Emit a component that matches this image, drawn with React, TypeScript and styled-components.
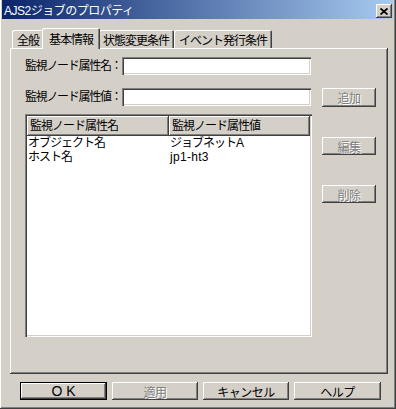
import * as React from 'react'
import styled, { createGlobalStyle } from 'styled-components'

const face = '#d4d0c8'
const shadow = '#808080'
const dark = '#404040'

const raised = `inset -1px -1px ${dark}, inset 1px 1px #fff, inset -2px -2px ${shadow}`
const sunken = `inset 1px 1px ${shadow}, inset 2px 2px ${dark}, inset -1px -1px #fff, inset -2px -2px ${face}`

const GlobalStyle = createGlobalStyle`
  body {
    margin: 0;
    background: ${face};
    font-family: "Liberation Sans", "Noto Sans CJK JP", sans-serif;
    font-size: 12px;
    color: #000;
  }
`

const Window = styled.div`
  width: 396px;
  height: 409px;
  box-sizing: border-box;
  padding: 0 3px 2px 2px;
  background: ${face};
  box-shadow: inset -1px -1px ${dark}, inset 1px 0 #fff, inset -2px -2px ${shadow};
  display: flex;
  flex-direction: column;
`

const TitleBar = styled.div`
  height: 19px;
  flex-shrink: 0;
  display: flex;
  align-items: center;
  justify-content: space-between;
  padding: 0 1px 0 2px;
  background: linear-gradient(to right, #0a246a, #a6caf0);
  color: #fff;
  letter-spacing: -0.5px;
`

const CloseButton = styled.div`
  width: 16px;
  height: 14px;
  margin-top: 3px;
  display: flex;
  align-items: center;
  justify-content: center;
  background: ${face};
  box-shadow: ${raised};
`

const Body = styled.div`
  flex: 1;
  display: flex;
  flex-direction: column;
  padding: 9px 5px 0 8px;
`

const TabStrip = styled.div`
  display: flex;
  align-items: flex-end;
  height: 20px;
  padding-left: 2px;
  position: relative;
  z-index: 1;
`

const Tab = styled.div<{ active?: boolean }>`
  height: ${p => (p.active ? 21 : 18)}px;
  margin: ${p => (p.active ? '0 -2px -1px' : '0')};
  padding: ${p => (p.active ? '0 7px' : '0 5px')};
  display: flex;
  align-items: center;
  box-sizing: border-box;
  background: ${face};
  border-radius: 2px 2px 0 0;
  box-shadow: inset 1px 1px #fff, inset -1px 0 ${dark}, inset -2px 0 ${shadow};
  letter-spacing: -1px;
  white-space: nowrap;
  position: relative;
  z-index: ${p => (p.active ? 2 : 0)};
`

const Panel = styled.div`
  width: 378px;
  height: 326px;
  box-sizing: border-box;
  padding: 9px 0 0 15px;
  box-shadow: ${raised};
`

const FieldRow = styled.div<{ gap?: number }>`
  display: flex;
  align-items: flex-start;
  margin-top: ${p => p.gap || 0}px;
`

const Label = styled.div`
  width: 97px;
  height: 18px;
  line-height: 19px;
  white-space: nowrap;
  letter-spacing: -1.3px;
`

const TextBox = styled.div`
  width: 189px;
  height: 18px;
  background: #fff;
  box-shadow: ${sunken};
`

const Button = styled.div<{ width: number; disabled?: boolean; isDefault?: boolean; height?: number }>`
  width: ${p => p.width}px;
  height: ${p => p.height || 18}px;
  flex-shrink: 0;
  display: flex;
  align-items: center;
  justify-content: center;
  background: ${face};
  box-shadow: ${p =>
    p.isDefault
      ? `inset 0 0 0 1px #000, inset -2px -2px ${dark}, inset 2px 2px #fff, inset -3px -3px ${shadow}`
      : raised};
  color: ${p => (p.disabled ? shadow : '#000')};
  text-shadow: ${p => (p.disabled ? '1px 1px #fff' : 'none')};
  letter-spacing: -0.5px;
`

const ButtonText = styled.span`
  font-size: 14px;
  letter-spacing: 4px;
  margin-right: -4px;
`

const Content = styled.div`
  display: flex;
  margin-top: 7px;
`

const ListView = styled.div`
  width: 287px;
  height: 223px;
  box-sizing: border-box;
  padding: 2px;
  background: #fff;
  box-shadow: ${sunken};
`

const ListHeader = styled.div`
  display: flex;
  height: 20px;
`

const HeaderCell = styled.div<{ width: number }>`
  width: ${p => p.width}px;
  box-sizing: border-box;
  padding-left: 3px;
  line-height: 20px;
  background: ${face};
  box-shadow: ${raised};
  letter-spacing: -1px;
  white-space: nowrap;
  overflow: hidden;
`

const ListRow = styled.div`
  display: flex;
  height: 14px;
  line-height: 14px;
  &:first-of-type {
    margin-top: 1px;
  }
`

const ListCell = styled.div<{ width: number; latin?: boolean }>`
  width: ${p => p.width}px;
  padding-left: 1px;
  box-sizing: border-box;
  letter-spacing: ${p => (p.latin ? '0.3px' : '-1px')};
  white-space: nowrap;
`

const SideButtons = styled.div`
  display: flex;
  flex-direction: column;
  gap: 30px;
  margin-left: 10px;
  padding-top: 23px;
`

const Footer = styled.div`
  display: flex;
  gap: 5px;
  margin: 8px 0 0 10px;
`

const rows = [
  { name: 'オブジェクト名', value: 'ジョブネットA', latin: false },
  { name: 'ホスト名', value: 'jp1-ht3', latin: true },
]

export default function App() {
  return (
    <Window>
      <GlobalStyle />
      <TitleBar>
        <span>AJS2ジョブのプロパティ</span>
        <CloseButton>
          <svg width="8" height="7" viewBox="0 0 8 7">
            <path d="M0.5 0.5 L7.5 6.5 M7.5 0.5 L0.5 6.5" stroke="#000" strokeWidth="1.8" />
          </svg>
        </CloseButton>
      </TitleBar>
      <Body>
        <TabStrip>
          <Tab>全般</Tab>
          <Tab active>基本情報</Tab>
          <Tab>状態変更条件</Tab>
          <Tab>イベント発行条件</Tab>
        </TabStrip>
        <Panel>
          <FieldRow>
            <Label>監視ノード属性名：</Label>
            <TextBox />
          </FieldRow>
          <FieldRow gap={13}>
            <Label>監視ノード属性値：</Label>
            <TextBox />
            <div style={{ marginLeft: 11 }}>
              <Button width={54} height={19} disabled>追加</Button>
            </div>
          </FieldRow>
          <Content>
            <ListView>
              <ListHeader>
                <HeaderCell width={142}>監視ノード属性名</HeaderCell>
                <HeaderCell width={141}>監視ノード属性値</HeaderCell>
              </ListHeader>
              {rows.map(row => (
                <ListRow key={row.name}>
                  <ListCell width={142}>{row.name}</ListCell>
                  <ListCell width={141} latin={row.latin}>{row.value}</ListCell>
                </ListRow>
              ))}
            </ListView>
            <SideButtons>
              <Button width={54} disabled>編集</Button>
              <Button width={54} disabled>削除</Button>
            </SideButtons>
          </Content>
        </Panel>
        <Footer>
          <Button width={87} isDefault><ButtonText>OK</ButtonText></Button>
          <Button width={86} disabled>適用</Button>
          <Button width={86}>キャンセル</Button>
          <Button width={87}>ヘルプ</Button>
        </Footer>
      </Body>
    </Window>
  )
}
